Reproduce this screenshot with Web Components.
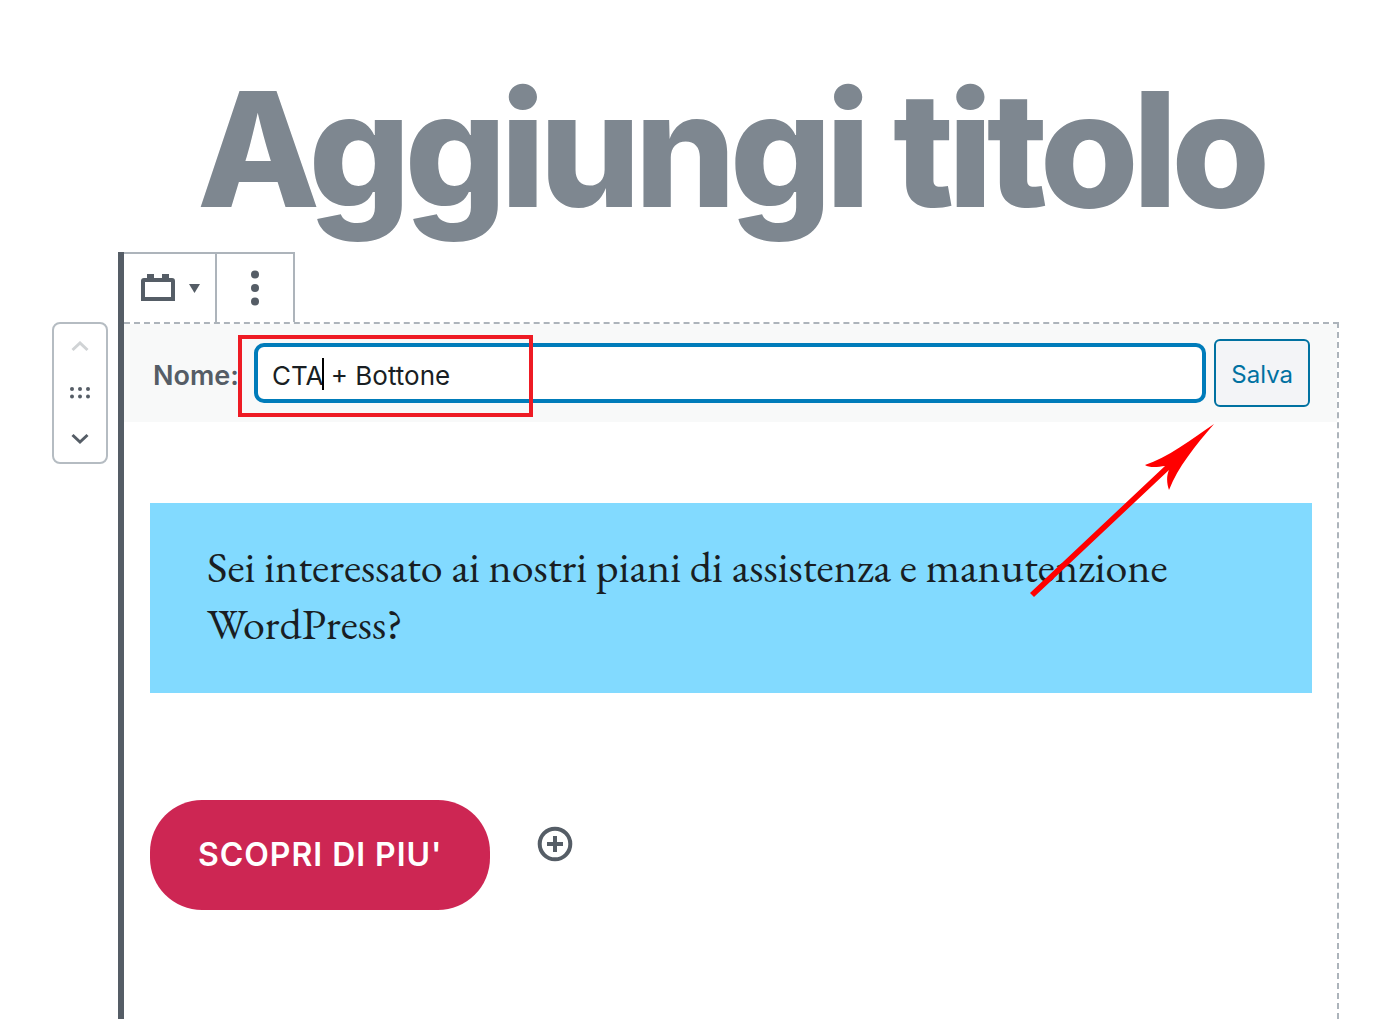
<!DOCTYPE html>
<html lang="it">
<head>
<meta charset="utf-8">
<meta name="viewport" content="width=device-width, initial-scale=1">
<title>Aggiungi titolo</title>
<style>
    html, body {
        height: 100%;
    }

    body {
        margin: 0;
        background: #fff;
        color: #191e23;
        font-family: Inter, "Liberation Sans", sans-serif;
        overflow: hidden;
    }
</style>
</head>
<body>
<post-editor>
    <post-title slot="title" data-placeholder="Aggiungi titolo"></post-title>
    <block-mover slot="mover"></block-mover>
    <block-toolbar slot="toolbar"></block-toolbar>
    <reusable-form data-label="Nome:" data-value="CTA + Bottone">Salva</reusable-form>
    <cta-text>Sei interessato ai nostri piani di assistenza e manutenzione WordPress?</cta-text>
    <cta-actions>SCOPRI DI PIU'</cta-actions>
</post-editor>

<script>
/**
 * Attach an open shadow root and fill it with the given markup.
 */
function renderShadow(element, html) {
    element.attachShadow({ mode: 'open' }).innerHTML = html;
}

/* Page shell: title on top, mover beside the selected block */
class PostEditor extends HTMLElement {
    constructor() {
        super();
        renderShadow(this, `
            <style>
                :host {
                    display: flex;
                    flex-direction: column;
                    box-sizing: border-box;
                    min-height: 100%;
                    padding: 51px 61px 0 52px;
                }

                .title {
                    padding: 0 0 5px 70px;
                }

                .row {
                    display: flex;
                    flex: 1;
                    gap: 10px;
                }

                .mover {
                    padding-top: 70px;
                }

                .block {
                    display: flex;
                    flex-direction: column;
                    flex: 1;
                    min-width: 0;
                    border-left: 6px solid #555d66;
                }

                .content {
                    flex: 1;
                    border-top: 2px dashed #adb4bb;
                    border-right: 2px dashed #adb4bb;
                }
            </style>
            <header class="title"><slot name="title"></slot></header>
            <main class="row">
                <div class="mover"><slot name="mover"></slot></div>
                <section class="block">
                    <slot name="toolbar"></slot>
                    <div class="content"><slot></slot></div>
                </section>
            </main>
        `);
    }
}

class PostTitle extends HTMLElement {
    constructor() {
        super();
        const placeholder = this.getAttribute('data-placeholder') || '';
        renderShadow(this, `
            <style>
                :host {
                    display: block;
                }

                textarea {
                    display: block;
                    box-sizing: border-box;
                    width: 100%;
                    height: 196px;
                    margin: 0;
                    padding: 0;
                    border: 0;
                    outline: 0;
                    background: none;
                    resize: none;
                    overflow: hidden;
                    color: #191e23;
                    font-family: inherit;
                    font-size: 160px;
                    font-weight: 800;
                    line-height: 196px;
                    letter-spacing: -0.04em;
                    text-align: center;
                }

                textarea::placeholder {
                    color: #7e8790;
                    opacity: 1;
                }
            </style>
            <textarea rows="1" aria-label="${placeholder}" placeholder="${placeholder}"></textarea>
        `);
    }
}

class BlockMover extends HTMLElement {
    constructor() {
        super();
        renderShadow(this, `
            <style>
                :host {
                    display: flex;
                    flex-direction: column;
                    box-sizing: border-box;
                    width: 56px;
                    border: 2px solid #b5bcc2;
                    border-radius: 8px;
                    background: #fff;
                }

                button {
                    display: flex;
                    align-items: center;
                    justify-content: center;
                    height: 46px;
                    padding: 0;
                    border: 0;
                    background: none;
                    color: #555d66;
                }

                button:disabled {
                    color: #d0d3d5;
                }
            </style>
            <button type="button" aria-label="Sposta su" disabled>
                <svg width="18" height="12" viewBox="0 0 18 12" fill="none" stroke="currentColor" stroke-width="3"><path d="M1.5 9 9 2l7.500 7"/></svg>
            </button>
            <button type="button" aria-label="Trascina">
                <svg width="20" height="12" viewBox="0 0 20 12" fill="currentColor">
                    <circle cx="2" cy="2" r="2"/><circle cx="10" cy="2" r="2"/><circle cx="18" cy="2" r="2"/>
                    <circle cx="2" cy="9.500" r="2"/><circle cx="10" cy="9.500" r="2"/><circle cx="18" cy="9.500" r="2"/>
                </svg>
            </button>
            <button type="button" aria-label="Sposta giù">
                <svg width="18" height="12" viewBox="0 0 18 12" fill="none" stroke="currentColor" stroke-width="3"><path d="M1.500 2 9 9l7.500-7"/></svg>
            </button>
        `);
    }
}

class BlockToolbar extends HTMLElement {
    constructor() {
        super();
        renderShadow(this, `
            <style>
                :host {
                    display: flex;
                    height: 70px;
                }

                button {
                    display: flex;
                    align-items: center;
                    justify-content: center;
                    box-sizing: border-box;
                    gap: 13px;
                    width: 78px;
                    padding: 0;
                    border: solid #adb4bb;
                    border-width: 2px 2px 0 0;
                    background: #fff;
                    color: #555d66;
                }

                .type {
                    width: 93px;
                }
            </style>
            <button class="type" type="button" aria-label="Cambia tipo di blocco">
                <svg width="36" height="28" viewBox="0 0 36 28" fill="currentColor">
                    <path fill-rule="evenodd" d="M7 0h7v4h8V0h7v4h3q3 0 3 3v20H1V7q0-3 3-3h3zM5 8v15h26V8z"/>
                </svg>
                <svg width="11" height="9" viewBox="0 0 11 9" fill="currentColor"><path d="M0 0h11L5.500 9z"/></svg>
            </button>
            <button type="button" aria-label="Altre opzioni">
                <svg width="8" height="36" viewBox="0 0 8 36" fill="currentColor">
                    <circle cx="4" cy="4.500" r="4"/><circle cx="4" cy="18" r="4"/><circle cx="4" cy="31.500" r="4"/>
                </svg>
            </button>
        `);
    }
}

/* Name field of a reusable block, with the highlight and arrow drawn over it */
class ReusableForm extends HTMLElement {
    constructor() {
        super();
        renderShadow(this, `
            <style>
                :host {
                    display: block;
                    position: relative;
                }

                form {
                    display: flex;
                    align-items: center;
                    box-sizing: border-box;
                    height: 98px;
                    padding: 0 27px 0 29px;
                    background: #f8f9f9;
                    font-size: 26px;
                }

                label {
                    width: 101px;
                    padding-top: 4px;
                    color: #555d66;
                    font-size: 27px;
                    font-weight: 600;
                }

                .field {
                    position: relative;
                    flex: 1;
                    margin-right: 8px;
                }

                input {
                    display: block;
                    box-sizing: border-box;
                    width: 100%;
                    height: 60px;
                    padding: 4px 14px 0;
                    border: 4px solid #007cba;
                    border-radius: 10px;
                    outline: 0;
                    background: #fff;
                    color: #191e23;
                    font: inherit;
                }

                .caret {
                    position: absolute;
                    top: 15px;
                    left: 68px;
                    width: 2px;
                    height: 32px;
                    background: #000;
                }

                .highlight {
                    position: absolute;
                    top: -8px;
                    left: -16px;
                    box-sizing: border-box;
                    width: 295px;
                    height: 82px;
                    border: 4px solid #ee1b24;
                    pointer-events: none;
                }

                button {
                    height: 68px;
                    padding: 2px 15px 0;
                    border: 2px solid #0071a1;
                    border-radius: 6px;
                    background: #f3f4f7;
                    color: #0071a1;
                    font-family: inherit;
                    font-size: 24px;
                }

                .arrow {
                    position: absolute;
                    top: 99px;
                    right: 123px;
                    z-index: 1;
                    pointer-events: none;
                }
            </style>
            <form>
                <label for="name">${this.getAttribute('data-label')}</label>
                <div class="field">
                    <input id="name" type="text" value="${this.getAttribute('data-value')}">
                    <span class="caret"></span>
                    <span class="highlight"></span>
                </div>
                <button type="button"><slot></slot></button>
            </form>
            <svg class="arrow" width="186" height="176" viewBox="0 0 186 176" fill="#f00" aria-hidden="true">
                <path d="M186 1C164 16 139 35 117 42C121 45 130 44 137 43L2 170L6 174L141 47C138 54 139 61 141 67C150 44 167 23 186 1z"/>
            </svg>
        `);
    }
}

class CtaText extends HTMLElement {
    constructor() {
        super();
        renderShadow(this, `
            <style>
                :host {
                    display: block;
                    margin: 81px 25px 0 26px;
                    padding: 35px 57px 41px;
                    background: #82daff;
                }

                p {
                    margin: 0;
                    font-family: "EB Garamond", "Liberation Serif", serif;
                    font-size: 44px;
                    line-height: 57px;
                }
            </style>
            <p><slot></slot></p>
        `);
    }
}

class CtaActions extends HTMLElement {
    constructor() {
        super();
        renderShadow(this, `
            <style>
                :host {
                    display: flex;
                    align-items: flex-start;
                    gap: 47px;
                    margin: 107px 25px 0 26px;
                }

                a {
                    padding: 0 48px;
                    border-radius: 52px;
                    background: #cd2653;
                    color: #fff;
                    font-size: 32px;
                    font-weight: 600;
                    line-height: 110px;
                    letter-spacing: 0.03em;
                    text-decoration: none;
                    white-space: nowrap;
                }

                button {
                    margin-top: 26px;
                    padding: 0;
                    border: 0;
                    background: none;
                    color: #555d66;
                }

                svg {
                    display: block;
                }
            </style>
            <a href="#"><slot></slot></a>
            <button type="button" aria-label="Aggiungi blocco">
                <svg width="36" height="36" viewBox="0 0 36 36" fill="none" stroke="currentColor">
                    <circle cx="18" cy="18" r="15.300" stroke-width="4"/>
                    <path stroke-width="4" d="M18 10v16M10 18h16"/>
                </svg>
            </button>
        `);
    }
}

customElements.define('post-editor', PostEditor);
customElements.define('post-title', PostTitle);
customElements.define('block-mover', BlockMover);
customElements.define('block-toolbar', BlockToolbar);
customElements.define('reusable-form', ReusableForm);
customElements.define('cta-text', CtaText);
customElements.define('cta-actions', CtaActions);
</script>
</body>
</html>
